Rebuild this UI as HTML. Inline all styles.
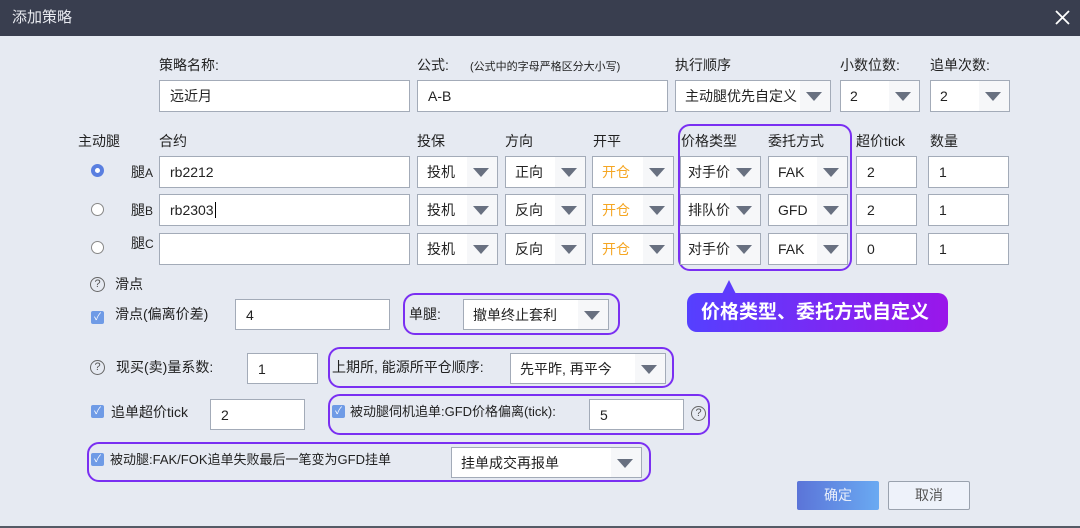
<!DOCTYPE html>
<html><head><meta charset="utf-8"><style>
*{box-sizing:border-box;margin:0;padding:0}
body{width:1080px;height:528px;overflow:hidden;background:#e6eaf2;font-family:"Liberation Sans","Noto Sans CJK SC",sans-serif;color:#222;font-size:14px;position:relative}
.a{position:absolute;white-space:nowrap}
.title{left:0;top:0;width:1080px;height:36px;background:#393e4f;color:#e8eaf0;font-size:15px;line-height:36px;padding-left:12px}
.inp{position:absolute;background:#fff;border:1.5px solid #a3abb8;padding-left:10px;font-size:14px;display:flex;align-items:center}
.sel{position:absolute;background:#fff;border:1.5px solid #a3abb8;padding-left:9px;font-size:14px;display:flex;align-items:center}
.sel::after{content:"";position:absolute;right:0;top:0;bottom:0;width:30px;background:#f6f7f9}
.sel i{position:absolute;right:8px;top:50%;margin-top:-4px;width:0;height:0;border-left:8px solid transparent;border-right:8px solid transparent;border-top:9px solid #687080;z-index:2}
.sel span{position:relative;z-index:1}
.box{position:absolute;border:2px solid #7a2ff2;border-radius:12px}
.lbl{position:absolute;font-size:14px;line-height:16px}
.radio{position:absolute;width:13px;height:13px;border-radius:50%;border:1px solid #888;background:#fff}
.cb{position:absolute;width:13px;height:13px;background:#6f9be6;border-radius:2px;color:#fff;font-size:10px;line-height:13px;text-align:center}
.q{position:absolute;width:15px;height:15px;border:1.3px solid #666;border-radius:50%;font-size:11px;line-height:13px;text-align:center;color:#555}
.or{color:#f5a623}
</style></head><body>
<div class="a title">添加策略</div>
<svg class="a" style="left:1055px;top:10px" width="15" height="15" viewBox="0 0 15 15"><path d="M1 1L14 14M14 1L1 14" stroke="#fff" stroke-width="1.8"/></svg>

<div class="lbl" style="left:159px;top:57px">策略名称:</div>
<div class="inp" style="left:159px;top:80px;width:251px;height:32px">远近月</div>
<div class="lbl" style="left:417px;top:57px">公式:</div>
<div class="lbl" style="left:470px;top:59px;font-size:11px">(公式中的字母严格区分大小写)</div>
<div class="inp" style="left:417px;top:80px;width:251px;height:32px">A-B</div>
<div class="lbl" style="left:675px;top:57px">执行顺序</div>
<div class="sel" style="left:675px;top:80px;width:156px;height:32px"><span>主动腿优先自定义</span><i></i></div>
<div class="lbl" style="left:840px;top:57px">小数位数:</div>
<div class="sel" style="left:840px;top:80px;width:80px;height:32px"><span>2</span><i></i></div>
<div class="lbl" style="left:930px;top:57px">追单次数:</div>
<div class="sel" style="left:930px;top:80px;width:80px;height:32px"><span>2</span><i></i></div>

<div class="lbl" style="left:78px;top:133px">主动腿</div>
<div class="lbl" style="left:159px;top:133px">合约</div>
<div class="lbl" style="left:417px;top:133px">投保</div>
<div class="lbl" style="left:505px;top:133px">方向</div>
<div class="lbl" style="left:593px;top:133px">开平</div>
<div class="lbl" style="left:681px;top:133px">价格类型</div>
<div class="lbl" style="left:768px;top:133px">委托方式</div>
<div class="lbl" style="left:856px;top:133px">超价tick</div>
<div class="lbl" style="left:930px;top:133px">数量</div>
<div class="box" style="left:678px;top:124px;width:174px;height:147px"></div>

<div class="radio" style="left:91px;top:164px;border:4px solid #5a7fe0"></div>
<div class="radio" style="left:91px;top:203px"></div>
<div class="radio" style="left:91px;top:241px"></div>
<div class="lbl" style="left:131px;top:164px">腿<span style="font-size:12px">A</span></div>
<div class="lbl" style="left:131px;top:202px">腿<span style="font-size:12px">B</span></div>
<div class="lbl" style="left:131px;top:235px">腿<span style="font-size:12px">C</span></div>

<div class="inp" style="left:159px;top:156px;width:251px;height:32px">rb2212</div>
<div class="inp" style="left:159px;top:194px;width:251px;height:32px">rb2303<span style="border-left:1px solid #000;height:16px;margin-left:1px"></span></div>
<div class="inp" style="left:159px;top:233px;width:251px;height:32px"></div>

<div class="sel" style="left:417px;top:156px;width:81px;height:32px"><span>投机</span><i></i></div>
<div class="sel" style="left:417px;top:194px;width:81px;height:32px"><span>投机</span><i></i></div>
<div class="sel" style="left:417px;top:233px;width:81px;height:32px"><span>投机</span><i></i></div>
<div class="sel" style="left:505px;top:156px;width:81px;height:32px"><span>正向</span><i></i></div>
<div class="sel" style="left:505px;top:194px;width:81px;height:32px"><span>反向</span><i></i></div>
<div class="sel" style="left:505px;top:233px;width:81px;height:32px"><span>反向</span><i></i></div>
<div class="sel" style="left:592px;top:156px;width:82px;height:32px"><span class="or">开仓</span><i></i></div>
<div class="sel" style="left:592px;top:194px;width:82px;height:32px"><span class="or">开仓</span><i></i></div>
<div class="sel" style="left:592px;top:233px;width:82px;height:32px"><span class="or">开仓</span><i></i></div>
<div class="sel" style="left:680px;top:156px;width:81px;height:32px;padding-left:7px"><span>对手价</span><i></i></div>
<div class="sel" style="left:680px;top:194px;width:81px;height:32px;padding-left:7px"><span>排队价</span><i></i></div>
<div class="sel" style="left:680px;top:233px;width:81px;height:32px;padding-left:7px"><span>对手价</span><i></i></div>
<div class="sel" style="left:768px;top:156px;width:80px;height:32px"><span>FAK</span><i></i></div>
<div class="sel" style="left:768px;top:194px;width:80px;height:32px"><span>GFD</span><i></i></div>
<div class="sel" style="left:768px;top:233px;width:80px;height:32px"><span>FAK</span><i></i></div>
<div class="inp" style="left:856px;top:156px;width:61px;height:32px">2</div>
<div class="inp" style="left:856px;top:194px;width:61px;height:32px">2</div>
<div class="inp" style="left:856px;top:233px;width:61px;height:32px">0</div>
<div class="inp" style="left:928px;top:156px;width:81px;height:32px">1</div>
<div class="inp" style="left:928px;top:194px;width:81px;height:32px">1</div>
<div class="inp" style="left:928px;top:233px;width:81px;height:32px">1</div>

<div class="q" style="left:90px;top:277px">?</div>
<div class="lbl" style="left:115px;top:276px">滑点</div>
<div class="cb" style="left:91px;top:311px">✓</div>
<div class="lbl" style="left:115px;top:306px">滑点(偏离价差)</div>
<div class="inp" style="left:235px;top:299px;width:155px;height:31px">4</div>
<div class="box" style="left:403px;top:293px;width:217px;height:42px"></div>
<div class="lbl" style="left:409px;top:306px">单腿:</div>
<div class="sel" style="left:463px;top:299px;width:146px;height:31px"><span>撤单终止套利</span><i></i></div>

<div class="q" style="left:90px;top:360px">?</div>
<div class="lbl" style="left:116px;top:359px">现买(卖)量系数:</div>
<div class="inp" style="left:247px;top:353px;width:71px;height:31px">1</div>
<div class="box" style="left:328px;top:347px;width:346px;height:41px"></div>
<div class="lbl" style="left:332px;top:359px">上期所, 能源所平仓顺序:</div>
<div class="sel" style="left:510px;top:353px;width:156px;height:31px"><span>先平昨, 再平今</span><i></i></div>

<div class="cb" style="left:91px;top:405px">✓</div>
<div class="lbl" style="left:111px;top:404px">追单超价tick</div>
<div class="inp" style="left:210px;top:399px;width:95px;height:31px">2</div>
<div class="box" style="left:328px;top:394px;width:382px;height:41px"></div>
<div class="cb" style="left:332px;top:405px">✓</div>
<div class="lbl" style="left:350px;top:404px;font-size:13px">被动腿伺机追单:GFD价格偏离(tick):</div>
<div class="inp" style="left:589px;top:399px;width:95px;height:31px">5</div>
<div class="q" style="left:691px;top:406px">?</div>

<div class="box" style="left:87px;top:442px;width:564px;height:40px"></div>
<div class="cb" style="left:91px;top:453px">✓</div>
<div class="lbl" style="left:110px;top:452px;font-size:13px">被动腿:FAK/FOK追单失败最后一笔变为GFD挂单</div>
<div class="sel" style="left:451px;top:447px;width:191px;height:31px"><span>挂单成交再报单</span><i></i></div>

<div class="a" style="left:722px;top:280px;width:0;height:0;border-left:7px solid transparent;border-right:7px solid transparent;border-bottom:14px solid #5c3cfc"></div>
<div class="a" style="left:687px;top:293px;width:261px;height:39px;border-radius:10px;background:linear-gradient(90deg,#5540ff,#9a16ea);color:#fff;font-weight:bold;font-size:19px;line-height:39px;padding-left:14px">价格类型、委托方式自定义</div>

<div class="a" style="left:797px;top:481px;width:82px;height:29px;background:linear-gradient(90deg,#5b74d8,#6aaaf2);border-radius:2px;color:#e8eefa;text-align:center;line-height:29px">确定</div>
<div class="a" style="left:888px;top:481px;width:82px;height:29px;background:#eef2fa;border:1.5px solid #9aa2ae;border-radius:2px;color:#555;text-align:center;line-height:26px">取消</div>
<div class="a" style="left:0;top:526px;width:1080px;height:2px;background:#555b66"></div>
</body></html>
